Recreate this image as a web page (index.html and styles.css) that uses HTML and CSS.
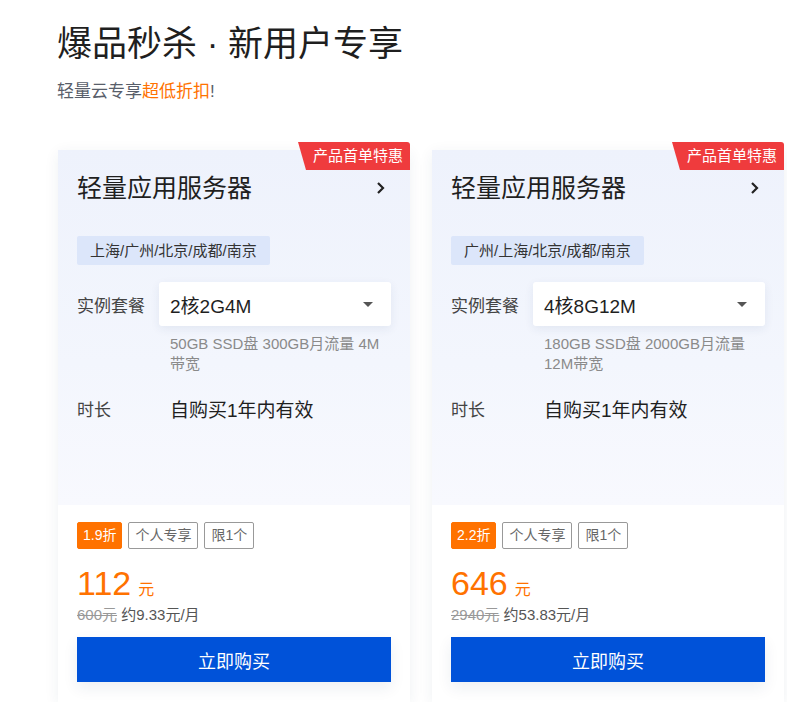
FILE: index.html
```html
<!DOCTYPE html>
<html lang="zh-CN">
<head>
<meta charset="utf-8">
<title>爆品秒杀</title>
<link rel="stylesheet" href="styles.css">
</head>
<body>
<div class="page">
  <h1 class="title">爆品秒杀 · 新用户专享</h1>
  <p class="subtitle">轻量云专享<span class="hl">超低折扣</span>!</p>
  <div class="cards">
    <div class="card">
      <div class="badge">产品首单特惠</div>
      <div class="card-top">
        <div class="card-head">
          <span class="card-name">轻量应用服务器</span>
          <svg class="chev" width="10" height="14" viewBox="0 0 10 14"><polyline points="2,2 7,7 2,12" fill="none" stroke="#222" stroke-width="2.2"/></svg>
        </div>
        <div class="region">上海/广州/北京/成都/南京</div>
        <div class="row">
          <span class="label">实例套餐</span>
          <div class="select"><span>2核2G4M</span><span class="caret"></span></div>
        </div>
        <p class="desc">50GB SSD盘 300GB月流量 4M带宽</p>
        <div class="row dur">
          <span class="label">时长</span>
          <span class="value">自购买1年内有效</span>
        </div>
      </div>
      <div class="card-bottom">
        <div class="tags">
          <span class="tag disc">1.9折</span>
          <span class="tag">个人专享</span>
          <span class="tag">限1个</span>
        </div>
        <div class="price"><span class="num">112</span><span class="unit">元</span></div>
        <div class="orig"><s>600元</s> 约9.33元/月</div>
        <button class="buy">立即购买</button>
      </div>
    </div>
    <div class="card">
      <div class="badge">产品首单特惠</div>
      <div class="card-top">
        <div class="card-head">
          <span class="card-name">轻量应用服务器</span>
          <svg class="chev" width="10" height="14" viewBox="0 0 10 14"><polyline points="2,2 7,7 2,12" fill="none" stroke="#222" stroke-width="2.2"/></svg>
        </div>
        <div class="region">广州/上海/北京/成都/南京</div>
        <div class="row">
          <span class="label">实例套餐</span>
          <div class="select"><span>4核8G12M</span><span class="caret"></span></div>
        </div>
        <p class="desc">180GB SSD盘 2000GB月流量 12M带宽</p>
        <div class="row dur">
          <span class="label">时长</span>
          <span class="value">自购买1年内有效</span>
        </div>
      </div>
      <div class="card-bottom">
        <div class="tags">
          <span class="tag disc">2.2折</span>
          <span class="tag">个人专享</span>
          <span class="tag">限1个</span>
        </div>
        <div class="price"><span class="num">646</span><span class="unit">元</span></div>
        <div class="orig"><s>2940元</s> 约53.83元/月</div>
        <button class="buy">立即购买</button>
      </div>
    </div>
  </div>
</div>
</body>
</html>
```

FILE: styles.css
```css
* { box-sizing: border-box; }
html, body { margin: 0; padding: 0; background: #fff; }
body {
  font-family: "Liberation Sans", "Noto Sans CJK SC", sans-serif;
  color: #222;
}
.page { padding: 25px 0 0 57px; }
.title {
  margin: 0;
  font-size: 35px;
  line-height: 38px;
  font-weight: 400;
  color: #1f1f1f;
}
.subtitle {
  margin: 17px 0 0;
  font-size: 17px;
  line-height: 24px;
  color: #585e6a;
}
.subtitle .hl { color: #ff7200; }
.cards {
  display: flex;
  gap: 22px;
  margin-top: 46px;
  padding-left: 1px;
}
.card {
  position: relative;
  width: 352px;
  flex: none;
  background: #fff;
  box-shadow: 0 3px 14px rgba(30, 50, 90, 0.07);
}
.badge {
  position: absolute;
  top: -8px;
  right: 0;
  width: 112px;
  height: 28px;
  line-height: 28px;
  padding-left: 15px;
  font-size: 15px;
  color: #fff;
  background: #ef3b3d;
  border-top-right-radius: 3px;
  clip-path: polygon(0 0, 100% 0, 100% 100%, 8px 100%);
}
.card-top {
  height: 355px;
  padding: 22px 19px 0;
  background: linear-gradient(180deg, #eef2fc 0%, #f3f6fd 60%, #f8f9fe 100%);
}
.card-head {
  display: flex;
  align-items: center;
  justify-content: space-between;
  height: 32px;
}
.card-name {
  font-size: 25px;
  line-height: 32px;
  color: #1f1f1f;
}
.chev { margin-right: 5px; }
.region {
  display: inline-block;
  margin-top: 32px;
  height: 29px;
  line-height: 29px;
  padding: 0 13px;
  font-size: 15px;
  color: #333;
  background: #dce6fa;
  border-radius: 2px;
}
.row {
  display: flex;
  align-items: center;
  margin-top: 17px;
}
.label {
  width: 82px;
  flex: none;
  font-size: 17px;
  color: #444;
}
.select {
  flex: 1;
  height: 44px;
  display: flex;
  align-items: center;
  justify-content: space-between;
  padding: 0 18px 0 11px;
  background: #fff;
  border-radius: 3px;
  font-size: 19px;
  color: #1f1f1f;
  box-shadow: 0 3px 10px rgba(40, 60, 110, 0.08);
}
.caret {
  width: 0;
  height: 0;
  border-left: 5px solid transparent;
  border-right: 5px solid transparent;
  border-top: 5px solid #555;
}
.desc {
  margin: 8px 0 0 93px;
  font-size: 15px;
  line-height: 20px;
  color: #8a8a8a;
}
.row.dur { margin-top: 20px; height: 28px; }
.value {
  padding-left: 11px;
  font-size: 19px;
  color: #1f1f1f;
}
.card-bottom { padding: 17px 19px 20px; }
.tags { display: flex; gap: 6px; }
.tag {
  height: 27px;
  line-height: 25px;
  padding: 0 6px;
  font-size: 14px;
  color: #666;
  border: 1px solid #999;
  border-radius: 2px;
}
.tag.disc {
  background: #ff7200;
  border-color: #ff7200;
  color: #fff;
  padding: 0 5px;
}
.price {
  margin-top: 14px;
  height: 40px;
  display: flex;
  align-items: baseline;
  color: #ff7200;
}
.num { font-size: 34px; line-height: 40px; }
.unit { font-size: 16px; margin-left: 7px; }
.orig {
  margin-top: 2px;
  font-size: 15px;
  line-height: 20px;
  color: #555;
}
.orig s { color: #999; }
.buy {
  display: block;
  width: 100%;
  margin-top: 12px;
  height: 45px;
  border: 0;
  background: #0052d9;
  color: #fff;
  font-family: inherit;
  font-size: 18px;
  box-shadow: 0 6px 14px rgba(30, 50, 90, 0.08);
}
```
